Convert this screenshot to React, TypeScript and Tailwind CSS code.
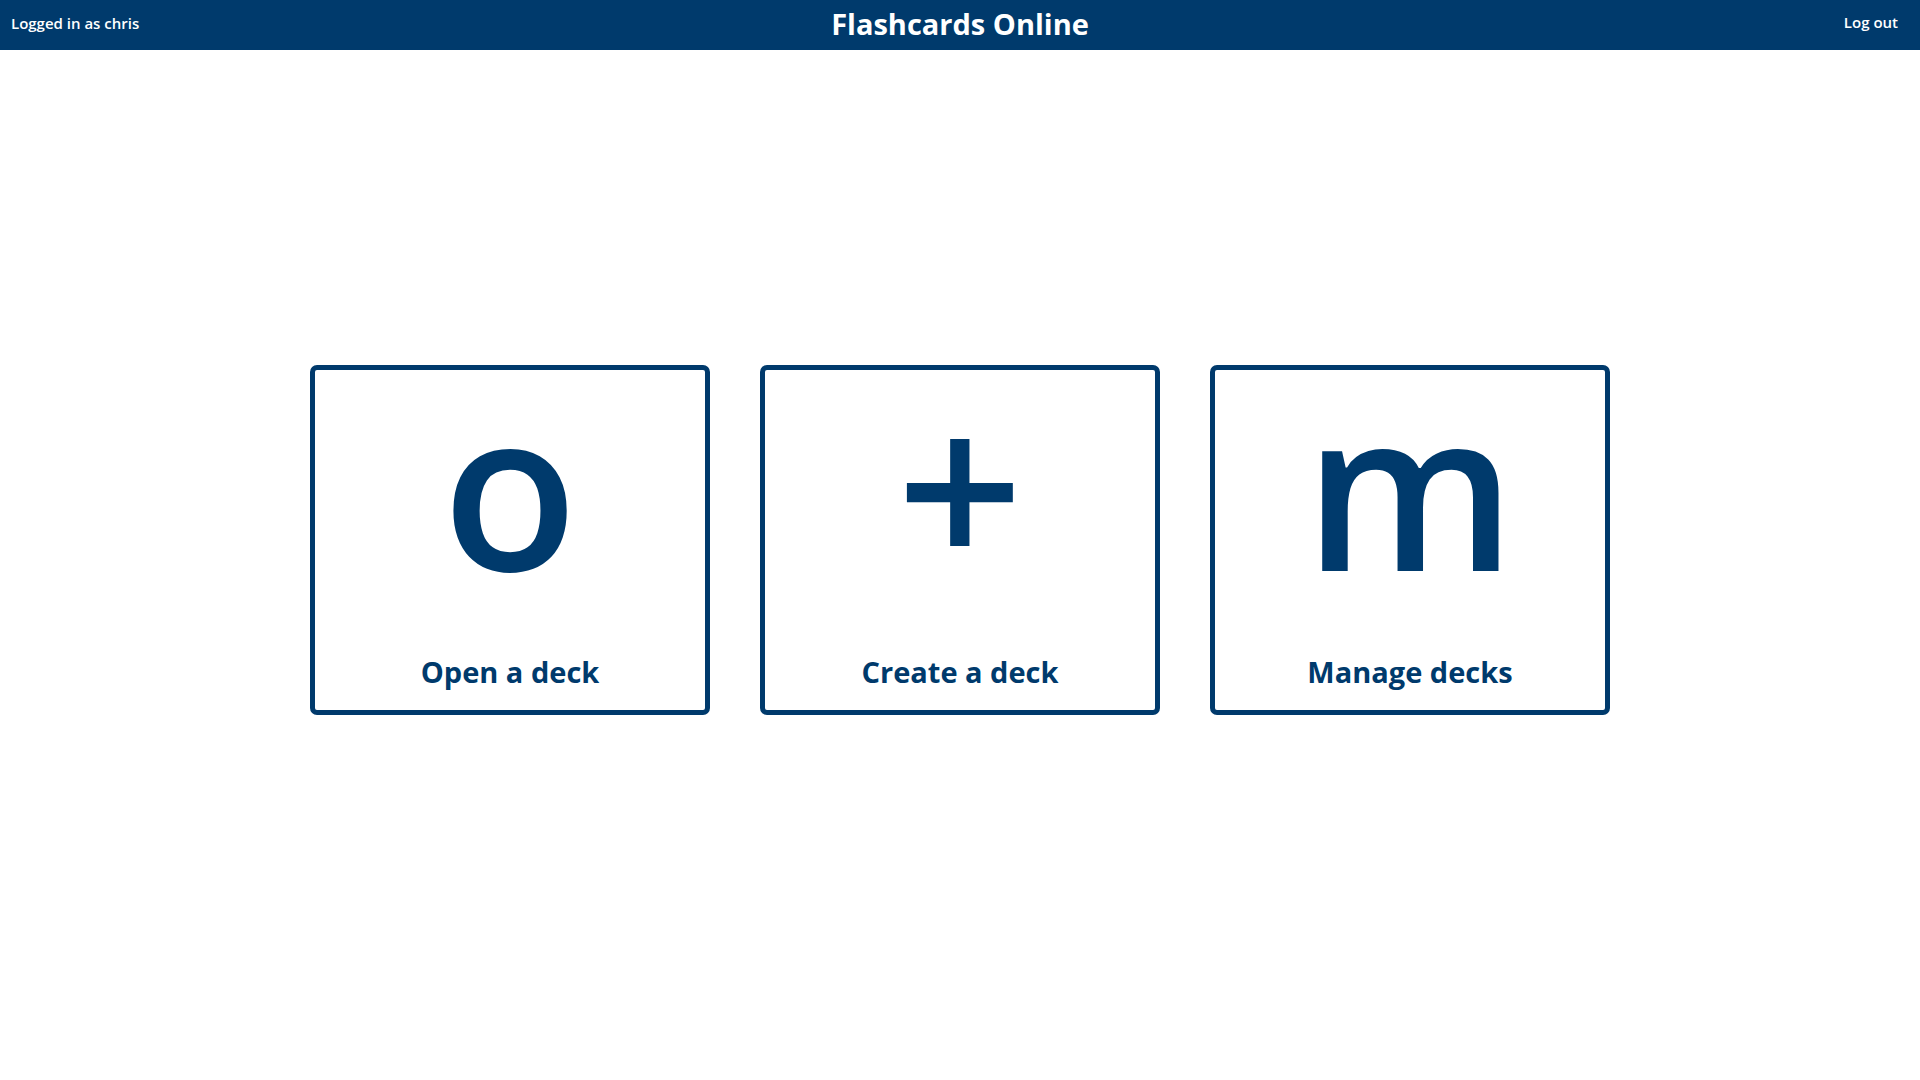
import React from "react";

const cards = [
    { glyph: "o", label: "Open a deck" },
    { glyph: "+", label: "Create a deck" },
    { glyph: "m", label: "Manage decks" },
];

export default function App() {
    return (
        <div className="min-h-screen bg-white font-['Open_Sans',sans-serif] text-[#003a6c]">
            {/* Top bar */}
            <header className="flex h-[50px] items-center justify-between bg-[#003a6c] px-[11px] pb-[3px] text-white">
                <span className="w-[200px] text-[15px] font-semibold">Logged in as chris</span>
                <h1 className="text-[29px] font-bold leading-none">Flashcards Online</h1>
                <span className="w-[200px] pr-[11px] pb-[3px] text-right text-[15px] font-semibold">Log out</span>
            </header>

            {/* Menu */}
            <main className="flex h-[calc(100vh-50px)] items-center justify-center gap-[50px] pb-[50px]">
                {cards.map((card) => (
                    <button
                        key={card.label}
                        className="flex h-[350px] w-[400px] cursor-pointer flex-col items-center rounded-[7px] border-[5px] border-[#003a6c] bg-white"
                    >
                        <div className="flex h-[287px] items-center justify-center pb-[58px]">
                            <span className="text-[222px] font-semibold leading-none">{card.glyph}</span>
                        </div>
                        <span className="text-[29px] font-bold leading-none">{card.label}</span>
                    </button>
                ))}
            </main>
        </div>
    );
}
